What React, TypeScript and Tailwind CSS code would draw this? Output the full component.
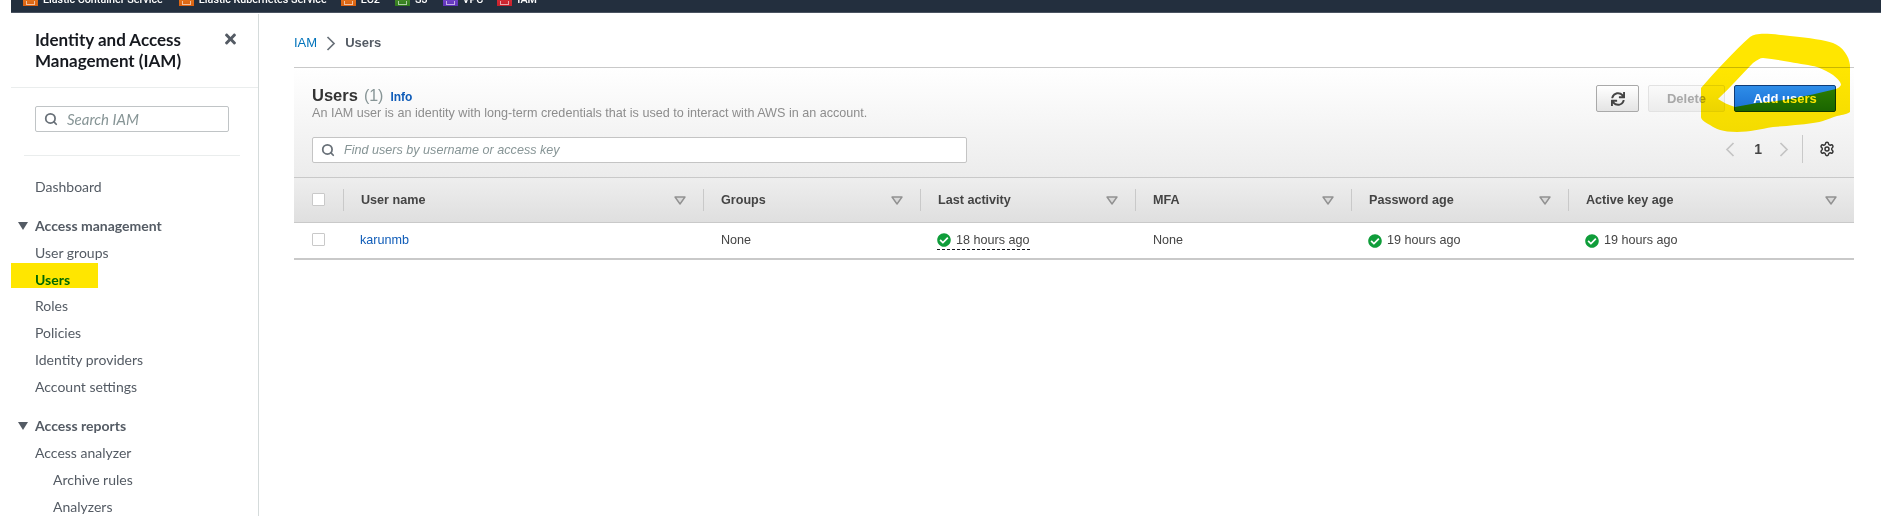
import { FaCheckCircle, FaSync, FaTimes } from "react-icons/fa";
import { Search, Settings } from "lucide-react";

const apps = [
  { c: "from-[#f08a2c] to-[#d9600f]", t: "Elastic Container Service", w: "mr-[16px]" },
  { c: "from-[#f08a2c] to-[#d9600f]", t: "Elastic Kubernetes Service", w: "mr-[14px]" },
  { c: "from-[#f08a2c] to-[#d9600f]", t: "EC2", w: "mr-[15px]" },
  { c: "from-[#5ea03a] to-[#2f7a1c]", t: "S3", w: "mr-[15px]" },
  { c: "from-[#8a55dd] to-[#5f33b8]", t: "VPC", w: "mr-[14px]" },
  { c: "from-[#ea3d48] to-[#c51f2a]", t: "IAM", w: "" },
];

function Sort() {
  return (
    <svg width="12" height="9" viewBox="0 0 12 9" className="shrink-0">
      <path d="M1 1h10L6 8z" fill="#d9d9d9" stroke="#919191" strokeWidth="1.4" strokeLinejoin="round" />
    </svg>
  );
}

function Chevron({ left, color }: { left?: boolean; color: string }) {
  return (
    <svg width="10" height="15" viewBox="0 0 10 15" className="shrink-0">
      <path d={left ? "M8.5 1L2 7.5L8.5 14" : "M1.5 1L8 7.5L1.5 14"} fill="none" stroke={color} strokeWidth="1.7" />
    </svg>
  );
}

function Nav({ label, sub }: { label: string; sub?: boolean }) {
  return <div className={`h-[26.75px] flex items-center text-[#545b64] ${sub ? "pl-[42px]" : "pl-[24px]"}`}>{label}</div>;
}

function Head({ label, gap }: { label: string; gap: string }) {
  return (
    <div className={`h-[26.75px] flex items-center pl-[7px] gap-[7px] font-bold text-[#545b64] ${gap}`}>
      <svg width="10" height="8" viewBox="0 0 10 8"><path d="M0 0h10L5 8z" fill="#545b64" /></svg>
      {label}
    </div>
  );
}

function Col({ label }: { label: string }) {
  return (
    <div className="flex items-center h-[22px] border-l border-[#c9c9c9] pl-[17px] pr-[17px] justify-between">
      <span className="font-bold text-[#444]">{label}</span>
      <Sort />
    </div>
  );
}

function Ok({ label, dashed }: { label: string; dashed?: boolean }) {
  return (
    <div className="pl-[17px] flex">
      <span className={`flex items-center gap-[5px] text-[#444] h-[19px] ${dashed ? "border-b border-dashed border-[#16191f]" : ""}`}>
        <FaCheckCircle className="text-[#0f9d3a] w-[14px] h-[14px]" />
        {label}
      </span>
    </div>
  );
}

const cols = "grid grid-cols-[49px_360px_217px_215px_216px_217px_286px] items-center";

export default function App() {
  return (
    <div className="relative h-[516px] w-[1881px] overflow-hidden bg-white font-['Liberation_Sans',sans-serif] text-[14px]">
      <div className="ml-[11px] h-[13px] bg-[#232f3e] border-b border-[#4a5361] overflow-hidden pl-[12px]">
        <div className="flex items-center -mt-[11px] h-[17px] text-white font-['Roboto',sans-serif] font-medium text-[10.75px]">
          {apps.map((a) => (
            <div key={a.t} className={`flex items-center gap-[5px] ${a.w}`}>
              <span className={`w-[15px] h-[17px] bg-gradient-to-b ${a.c} flex items-end justify-center pb-[1px]`}>
                <span className="w-[9px] h-[4px] border-x border-b border-white/60 block" />
              </span>
              <span className="whitespace-nowrap pt-[5px] leading-[12px]">{a.t}</span>
            </div>
          ))}
        </div>
      </div>

      <div className="flex h-[503px]">
        <aside className="ml-[11px] w-[248px] shrink-0 border-r border-[#d5dbdb] mt-[1px] font-['Lato',sans-serif] text-[14px]">
          <div className="h-[74px] border-b border-[#eaeded] pl-[24px] pr-[21px] pt-[15px] flex justify-between">
            <div className="text-[17px] leading-[21px] font-bold text-[#16191f]">
              Identity and Access
              <br />
              Management (IAM)
            </div>
            <FaTimes className="w-[13px] h-[16px] mt-[2px] text-[#545b64]" />
          </div>
          <div className="pt-[18px]">
            <div className="ml-[24px] w-[194px] h-[26px] border border-[#c0c4c6] rounded-[2px] flex items-center pl-[8px] gap-[9px] text-[#879596] italic text-[15px]">
              <Search className="w-[14px] h-[14px] text-[#687078]" strokeWidth={3} />
              Search IAM
            </div>
            <div className="mt-[23px] ml-[13px] w-[216px] border-t border-[#eaeded]" />
          </div>
          <div className="pt-[17.5px]">
            <Nav label="Dashboard" />
            <Head label="Access management" gap="mt-[12px]" />
            <Nav label="User groups" />
            <div className="relative h-[26.75px] flex items-center pl-[24px] font-bold text-[#0073bb]">
              Users
              <span className="absolute left-0 -top-[3px] w-[87px] h-[25px] bg-[#ffe600] mix-blend-multiply" />
            </div>
            <Nav label="Roles" />
            <Nav label="Policies" />
            <Nav label="Identity providers" />
            <Nav label="Account settings" />
            <Head label="Access reports" gap="mt-[13px]" />
            <Nav label="Access analyzer" />
            <Nav label="Archive rules" sub />
            <Nav label="Analyzers" sub />
          </div>
        </aside>

        <main className="ml-[35px] w-[1560px] text-[12.6px]">
          <div className="h-[54px] pt-[6px] flex items-center gap-[9px]">
            <span className="text-[#0073bb] text-[13px]">IAM</span>
            <Chevron color="#687078" />
            <span className="text-[#545b64] font-bold text-[13px]">Users</span>
          </div>

          <div className="h-[111px] border-t border-b border-[#c9c9c9] bg-gradient-to-b from-white to-[#ececec] pl-[18px] flex justify-between">
            <div className="pt-[15px]">
              <div className="flex items-baseline h-[20px]">
                <span className="text-[16.5px] font-bold text-[#333]">Users</span>
                <span className="text-[16px] text-[#879596] ml-[6px]">(1)</span>
                <span className="text-[12px] font-bold text-[#0f5cb8] ml-[7px]">Info</span>
              </div>
              <div className="text-[#8d8d8d] h-[18px] leading-[18px] mt-[1px]">An IAM user is an identity with long-term credentials that is used to interact with AWS in an account.</div>
              <div className="mt-[15px] w-[655px] h-[26px] bg-white border border-[#c4c4c4] rounded-[2px] flex items-center pl-[8px] gap-[9px] text-[#879596] italic">
                <Search className="w-[14px] h-[14px] text-[#687078]" strokeWidth={3} />
                Find users by username or access key
              </div>
            </div>
            <div className="flex flex-col items-end pr-[18px] pt-[17px]">
              <div className="flex gap-[9px] text-[13px]">
                <button className="w-[43px] h-[27px] rounded-[2px] border border-[#a9a9a9] bg-gradient-to-b from-white to-[#e4e4e4] flex items-center justify-center">
                  <FaSync className="w-[14px] h-[14px] text-[#444]" />
                </button>
                <button className="w-[77px] h-[27px] rounded-[2px] border border-[#e2e2e2] bg-gradient-to-b from-[#fafafa] to-[#ececec] text-[#a8a8a8] font-bold">Delete</button>
                <button className="w-[102px] h-[27px] rounded-[2px] border border-[#0f3c78] bg-gradient-to-b from-[#2e8de8] to-[#1a6fd4] text-white font-bold">Add users</button>
              </div>
              <div className="flex items-center mt-[23px] h-[28px] text-[#444]">
                <Chevron left color="#c4c4c4" />
                <span className="font-bold text-[14px] ml-[19px] mr-[17px]">1</span>
                <Chevron color="#c4c4c4" />
                <span className="h-[28px] border-l border-[#c9c9c9] ml-[13px] mr-[16px]" />
                <Settings className="w-[16px] h-[16px] text-[#333] mr-[1px]" strokeWidth={2.2} />
              </div>
            </div>
          </div>

          <div className={`${cols} h-[45px] bg-gradient-to-b from-[#eeeeee] to-[#dfdfdf] border-b border-[#c9c9c9]`}>
            <span className="ml-[18px] mb-[2px] w-[13px] h-[13px] bg-white border border-[#c9c9c9] rounded-[1px]" />
            <Col label="User name" />
            <Col label="Groups" />
            <Col label="Last activity" />
            <Col label="MFA" />
            <Col label="Password age" />
            <Col label="Active key age" />
          </div>

          <div className={`${cols} h-[37px] border-b-2 border-[#c9c9c9]`}>
            <span className="ml-[18px] mb-[2px] w-[13px] h-[13px] bg-white border border-[#c9c9c9] rounded-[1px]" />
            <span className="pl-[17px] text-[#0f5cb8]">karunmb</span>
            <span className="pl-[18px] text-[#444]">None</span>
            <Ok label="18 hours ago" dashed />
            <span className="pl-[18px] text-[#444]">None</span>
            <Ok label="19 hours ago" />
            <Ok label="19 hours ago" />
          </div>
        </main>
      </div>

      <svg width="1881" height="516" viewBox="0 0 1881 516" className="absolute left-0 top-0 pointer-events-none mix-blend-multiply">
        <path
          fillRule="evenodd"
          fill="#ffe600"
          d="M1701 88C1715 72 1735 50 1750 37C1756 33 1765 33 1790 36C1810 38 1825 40 1833 43C1843 47 1849 56 1850 65L1850 112C1846 115 1840 115 1837 116C1828 119 1822 122 1813 123C1800 125 1785 126 1773 127C1760 129 1750 132 1737 132C1722 132 1716 129 1710 125C1705 122 1701 120 1701 117Z M1718 99C1730 88 1742 74 1753 63C1757 60 1760 58 1763 58C1772 59 1780 60 1790 62C1800 64 1810 65 1817 67C1824 70 1829 72 1833 75C1837 78 1841 82 1841 85C1840 87 1838 88 1836 89C1820 93 1805 96 1790 99C1778 101 1768 102 1757 103C1750 104 1742 106 1735 107C1728 105 1723 102 1718 99Z"
        />
      </svg>
    </div>
  );
}
